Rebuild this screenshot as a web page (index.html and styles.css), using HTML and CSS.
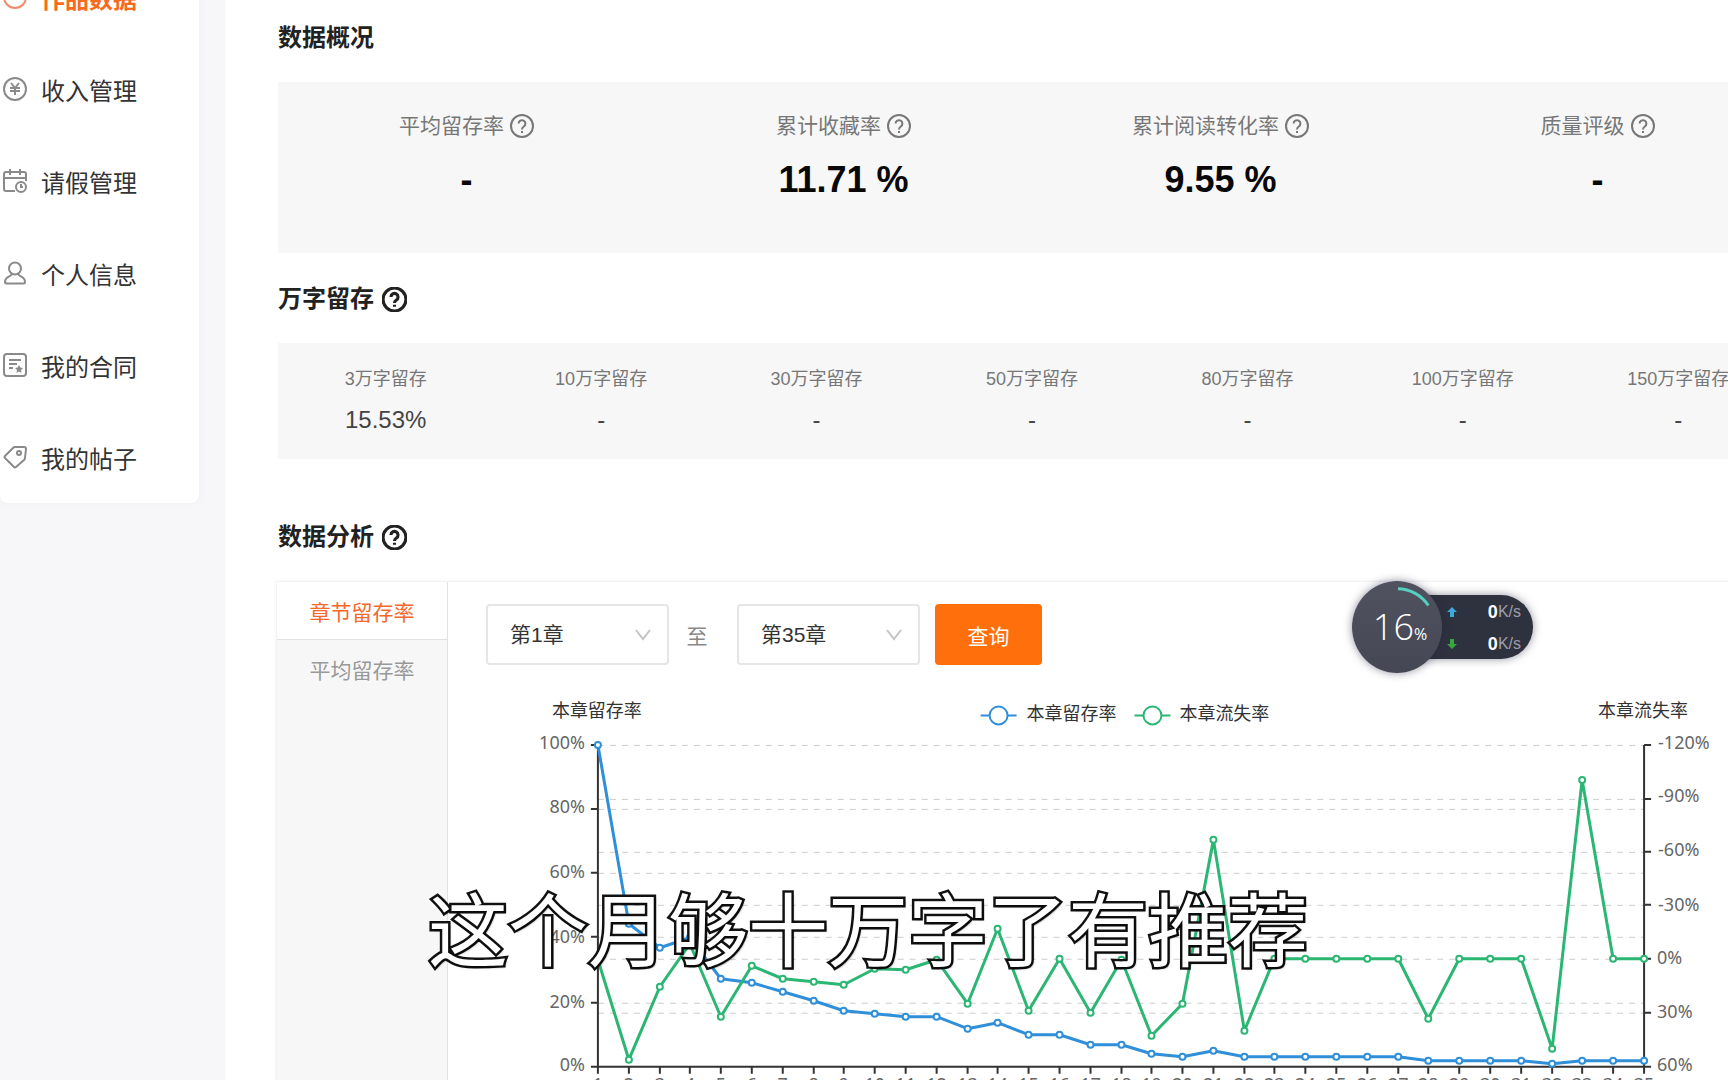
FILE: index.html
```html
<!DOCTYPE html>
<html lang="zh-CN">
<head>
<meta charset="utf-8">
<meta name="viewport" content="width=device-width, initial-scale=1">
<title>作品数据</title>
<link rel="stylesheet" href="styles.css">
</head>
<body>
<svg class="defs" aria-hidden="true">
  <symbol id="help" viewBox="0 0 24 24"><circle cx="12" cy="12" r="11"/><path d="M8.600 9.600a3.400 3.400 0 1 1 5.200 2.900c-1.200.8-1.800 1.300-1.800 2.900M12 17v2"/></symbol>
  <symbol id="chevron" viewBox="0 0 18 12"><path d="M2 1l7 9 7-9"/></symbol>
</svg>
<div class="page">
  <nav class="sidebar">
    <a class="item active" href="#"><svg viewBox="0 0 24 24"><circle cx="12" cy="12" r="11"/><path d="M8 9v5M12 11v3M16 9v5"/></svg>作品数据</a>
    <a class="item" href="#"><svg viewBox="0 0 24 24"><circle cx="12" cy="12" r="11"/><path d="M8 6l4 5 4-5M7 11h10M7 14h10M12 11v7"/></svg>收入管理</a>
    <a class="item" href="#"><svg viewBox="0 0 24 24"><path d="M12 22H3a2 2 0 0 1-2-2V5a2 2 0 0 1 2-2h18a2 2 0 0 1 2 2v7M1 9h22M7 0v6M17 0v6"/><circle cx="18" cy="18" r="5"/><path d="M18 15v3h2"/></svg>请假管理</a>
    <a class="item" href="#"><svg viewBox="0 0 24 24"><circle cx="12" cy="7.500" r="6"/><path d="M9 13c-1 3-7 2-7 8 0 1 .5 1.500 1.500 1.500h17c1 0 1.500-.5 1.500-1.500 0-6-6-5-7-8"/></svg>个人信息</a>
    <a class="item" href="#"><svg viewBox="0 0 24 24"><rect x="1" y="1" width="22" height="22" rx="3"/><path d="M6 7h12M6 11h8M6 15h4"/><path class="solid" d="M16 12l1.300 2.600 2.700.4-2 2 .5 3-2.500-1.500-2.500 1.500.5-3-2-2 2.700-.4z"/></svg>我的合同</a>
    <a class="item" href="#"><svg viewBox="0 0 24 24"><path d="M12 2h9q2 0 2 2l-1 9q0 1-1 2l-8 7q-1 1-2 0l-9-9q-1-1 0-2l8-8q1-1 2-1z"/><circle cx="16" cy="8" r="2"/></svg>我的帖子</a>
  </nav>
  <main class="main">
    <h2>数据概况</h2>
    <section class="card overview">
      <div class="stat"><span class="name">平均留存率<svg><use href="#help"/></svg></span><strong>-</strong></div>
      <div class="stat"><span class="name">累计收藏率<svg><use href="#help"/></svg></span><strong>11.71 %</strong></div>
      <div class="stat"><span class="name">累计阅读转化率<svg><use href="#help"/></svg></span><strong>9.55 %</strong></div>
      <div class="stat"><span class="name">质量评级<svg><use href="#help"/></svg></span><strong>-</strong></div>
    </section>
    <h2>万字留存<svg><use href="#help"/></svg></h2>
    <section class="card retention">
      <div class="stage"><span>3万字留存</span><b>15.53%</b></div>
      <div class="stage"><span>10万字留存</span><b>-</b></div>
      <div class="stage"><span>30万字留存</span><b>-</b></div>
      <div class="stage"><span>50万字留存</span><b>-</b></div>
      <div class="stage"><span>80万字留存</span><b>-</b></div>
      <div class="stage"><span>100万字留存</span><b>-</b></div>
      <div class="stage"><span>150万字留存</span><b>-</b></div>
    </section>
    <h2 class="spaced">数据分析<svg><use href="#help"/></svg></h2>
    <section class="panel">
      <div class="tabs">
        <button class="tab selected" type="button">章节留存率</button>
        <button class="tab" type="button">平均留存率</button>
      </div>
      <div class="analysis">
        <form class="controls">
          <span class="picker"><select aria-label="起始章节"><option>第1章</option></select><svg><use href="#chevron"/></svg></span>
          <span class="to">至</span>
          <span class="picker"><select aria-label="结束章节"><option>第35章</option></select><svg><use href="#chevron"/></svg></span>
          <button class="query" type="button">查询</button>
        </form>
        <svg class="chart" viewBox="448 665 1338 440" role="img" aria-label="章节留存率">
          <defs>
            <marker id="dot-blue" markerUnits="userSpaceOnUse" markerWidth="10" markerHeight="10" refX="5" refY="5"><circle class="dot blue" cx="5" cy="5" r="3"/></marker>
            <marker id="dot-green" markerUnits="userSpaceOnUse" markerWidth="10" markerHeight="10" refX="5" refY="5"><circle class="dot green" cx="5" cy="5" r="3"/></marker>
          </defs>
          <path class="grid" d="M598 745.500H1645M598 799.500H1645M598 809.500H1645M598 852.500H1645M598 873.500H1645M598 905.500H1645M598 937.500H1645M598 959.500H1645M598 1003.500H1645M598 1013.500H1645"/>
          <path class="axis" d="M598 745V1067H1645V745M591 745h7M591 809h7M591 873h7M591 937h7M591 1003h7M591 1067h7M1645 745h7M1645 799h7M1645 852h7M1645 905h7M1645 959h7M1645 1013h7M1645 1067h7"/>
          <path class="axis" id="ticks" d=""/>
          <g class="caption">
            <text x="552" y="717">本章留存率</text>
            <text x="1599" y="717">本章流失率</text>
            <text x="1027" y="720">本章留存率</text>
            <text x="1180" y="720">本章流失率</text>
          </g>
          <g class="key blue"><path d="M981 715.500h36"/><circle cx="999" cy="715.500" r="9"/></g>
          <g class="key green"><path d="M1135 715.500h36"/><circle cx="1153" cy="715.500" r="9"/></g>
          <g class="label left">
            <text x="585" y="749">100%</text><text x="585" y="813">80%</text><text x="585" y="878">60%</text><text x="585" y="943">40%</text><text x="585" y="1008">20%</text><text x="585" y="1071">0%</text>
          </g>
          <g class="label">
            <text x="1659" y="749">-120%</text><text x="1659" y="802">-90%</text><text x="1659" y="856">-60%</text><text x="1659" y="911">-30%</text><text x="1658" y="964">0%</text><text x="1658" y="1018">30%</text><text x="1658" y="1071">60%</text>
          </g>
          <g class="label middle" id="chapters"></g>
          <polyline class="line blue" id="kept" points=""/>
          <polyline class="line green" id="lost" points=""/>
        </svg>
      </div>
    </section>
  </main>
</div>
<aside class="monitor">
  <div class="speeds">
    <div><svg viewBox="0 0 12 12"><path class="up" d="M6 1l5 5H8v5H4V6H1z"/></svg><b>0</b><small>K/s</small></div>
    <div><svg viewBox="0 0 12 12"><path class="down" d="M6 11L1 6h3V1h4v5h3z"/></svg><b>0</b><small>K/s</small></div>
  </div>
  <div class="usage"><svg viewBox="0 0 92 92"><path d="M47 8a38 38 0 0 1 31 17"/></svg><span>16</span><small>%</small></div>
</aside>
<p class="subtitle">这个月够十万字了有推荐</p>
<script src="chart.js"></script>
</body>
</html>
```
FILE: styles.css
```css
* { box-sizing: border-box; }
body {
  margin: 0;
  background: #f7f7f9;
  color: #333;
  font-family: "Liberation Sans", "Noto Sans CJK SC", sans-serif;
}
a { color: inherit; text-decoration: none; }
svg { fill: none; stroke: currentColor; }
button, select { font: inherit; }
.defs { position: absolute; width: 0; height: 0; }

.page {
  display: flex;
  align-items: stretch;
  gap: 26px;
  height: 100vh;
  overflow: hidden;
}

.sidebar {
  flex: 0 0 199px;
  align-self: flex-start;
  margin-top: -49px;
  background: #fff;
  border-radius: 8px;
  box-shadow: 0 0 8px rgba(0, 0, 0, 0.03);
}
.item {
  display: flex;
  align-items: center;
  gap: 14px;
  height: 92px;
  padding-left: 3px;
  font-size: 24px;
}
.item svg { width: 24px; height: 24px; stroke: #8a8a8a; stroke-width: 2; }
.item .solid { fill: #8a8a8a; stroke: none; }
.item.active { color: #f76b1c; font-weight: 700; }
.item.active svg { stroke: #f28a6a; }

.main {
  flex: 1;
  min-width: 0;
  margin-right: -58px;
  padding: 22px 0 0 53px;
  background: #fff;
}
h2 {
  display: flex;
  align-items: center;
  gap: 8px;
  margin: 0 0 28px;
  font-size: 24px;
  line-height: 32px;
  color: #222;
}
h2 svg { width: 25px; height: 25px; stroke-width: 3; overflow: visible; }
.card + h2 { margin-top: 30px; }
.card + h2.spaced { margin-top: 62px; }
.card { display: grid; background: #f7f7f7; }

.overview { grid-template-columns: repeat(4, 1fr); height: 171px; padding-top: 28px; }
.stat { display: flex; flex-direction: column; align-items: center; gap: 16px; }
.name {
  display: flex;
  align-items: center;
  gap: 6px;
  font-size: 21px;
  line-height: 32px;
  color: #777;
}
.name svg { width: 24px; height: 24px; stroke-width: 2; }
.stat strong { font-size: 36px; line-height: 44px; color: #080808; }

.retention { grid-template-columns: repeat(7, 1fr); height: 116px; padding-top: 20px; }
.stage { display: flex; flex-direction: column; align-items: center; gap: 9px; white-space: nowrap; }
.stage span { font-size: 18px; line-height: 32px; color: #777; }
.stage b { font-size: 24px; line-height: 32px; font-weight: 400; color: #444; }

.panel {
  display: flex;
  margin-left: -2px;
  border: 1px solid #f2f2f2;
  box-shadow: 0 0 4px rgba(0, 0, 0, 0.05);
}
.tabs { flex: 0 0 170px; background: #f7f7f7; border-right: 1px solid #e2e2e2; }
.tab {
  display: block;
  width: 100%;
  height: 58px;
  padding: 0;
  border: 0;
  background: none;
  font-size: 21px;
  color: #999;
}
.tab.selected { width: 170px; background: #fff; border-bottom: 1px solid #e2e2e2; color: #f4692a; }
.analysis { flex: 1; min-width: 0; }

.controls { display: flex; align-items: center; padding: 22px 0 0 38px; font-size: 21px; }
.picker { position: relative; width: 183px; height: 61px; }
.picker select {
  appearance: none;
  width: 100%;
  height: 100%;
  padding: 0 22px;
  border: 2px solid #e6e6e6;
  border-radius: 4px;
  background: #fff;
  color: #333;
}
.picker svg { position: absolute; right: 17px; top: 25px; width: 18px; height: 12px; stroke: #c4c4c4; stroke-width: 2; pointer-events: none; }
.to { width: 68px; padding-right: 12px; text-align: center; color: #888; }
.query { width: 107px; height: 61px; margin-left: 15px; border: 0; border-radius: 4px; background: #ff6f0b; color: #fff; }

.chart { display: block; width: 100%; }
.grid { stroke: #ccc; stroke-dasharray: 6 6; }
.axis { stroke: #333; stroke-width: 2; }
.chart text { stroke: none; font-size: 18px; }
.caption { fill: #333; }
.label { fill: #666; font-family: "Noto Sans", sans-serif; }
.left { text-anchor: end; }
.middle { text-anchor: middle; }
.blue { stroke: #2f8fd8; }
.green { stroke: #2bb673; }
.key { stroke-width: 2; }
.key circle { fill: #fff; }
.line { stroke-width: 3; stroke-linejoin: round; }
.dot { fill: #fff; stroke-width: 2; }
#kept { marker: url(#dot-blue); }
#lost { marker: url(#dot-green); }

.monitor { position: absolute; left: 1352px; top: 581px; width: 181px; height: 92px; color: #fff; }
.speeds {
  position: absolute;
  inset: 14px 0 14px 46px;
  padding: 1px 12px 1px 48px;
  border-radius: 0 32px 32px 0;
  background: #2e313e;
  box-shadow: 0 0 8px rgba(40, 40, 70, 0.5);
}
.speeds div { display: flex; align-items: center; height: 32px; font-size: 18px; }
.speeds svg { width: 12px; height: 12px; margin-right: auto; stroke: none; }
.speeds small { font-size: 16px; color: #9da0aa; }
.up { fill: #3fa9dc; }
.down { fill: #37a63f; }
.usage {
  position: absolute;
  left: 0;
  top: 0;
  display: flex;
  align-items: baseline;
  justify-content: center;
  width: 90px;
  height: 92px;
  border-radius: 50%;
  background: linear-gradient(#50525f, #454854);
  box-shadow: 0 0 8px rgba(40, 40, 70, 0.5);
  font-family: "Open Sans", sans-serif;
  font-weight: 300;
  font-size: 36px;
  line-height: 92px;
  padding-left: 6px;
}
.usage small { font-size: 16px; font-weight: 400; }
.usage svg { position: absolute; inset: 0; stroke: #55cfc0; stroke-width: 3; }

.subtitle {
  position: absolute;
  left: 8px;
  right: 0;
  top: 879px;
  margin: 0;
  text-align: center;
  font-family: KaiTi, "Noto Sans CJK SC", sans-serif;
  font-size: 80px;
  line-height: 92px;
  color: #fff;
  -webkit-text-stroke: 5px #111;
  paint-order: stroke fill;
  text-shadow: 2px 2px 2px rgba(0, 0, 0, 0.4);
}
```
FILE: chart.js
```js
// Plot heights of the two series, one entry per chapter.
const kept = [745, 924, 948, 938, 979, 983, 992, 1001, 1011, 1014, 1017, 1017, 1029, 1023, 1035, 1035, 1045, 1045, 1054, 1057, 1051, 1057, 1057, 1057, 1057, 1057, 1057, 1061, 1061, 1061, 1061, 1064, 1061, 1061, 1061];
const lost = [960, 1060, 987, 944, 1017, 966, 979, 982, 985, 969, 970, 960, 1004, 929, 1011, 959, 1013, 960, 1036, 1004, 840, 1031, 959, 959, 959, 959, 959, 1019, 959, 959, 959, 1049, 780, 959, 959];
const x = i => Math.round(598 + i * 1047 / 34);
const points = ys => ys.map((y, i) => x(i) + ',' + y).join(' ');

document.getElementById('kept').setAttribute('points', points(kept));
document.getElementById('lost').setAttribute('points', points(lost));
document.getElementById('ticks').setAttribute('d', kept.map((_, i) => `M${x(i)} 1067v7`).join(''));
document.getElementById('chapters').innerHTML = kept.map((_, i) => `<text x="${x(i)}" y="1091">${i + 1}</text>`).join('');
```
